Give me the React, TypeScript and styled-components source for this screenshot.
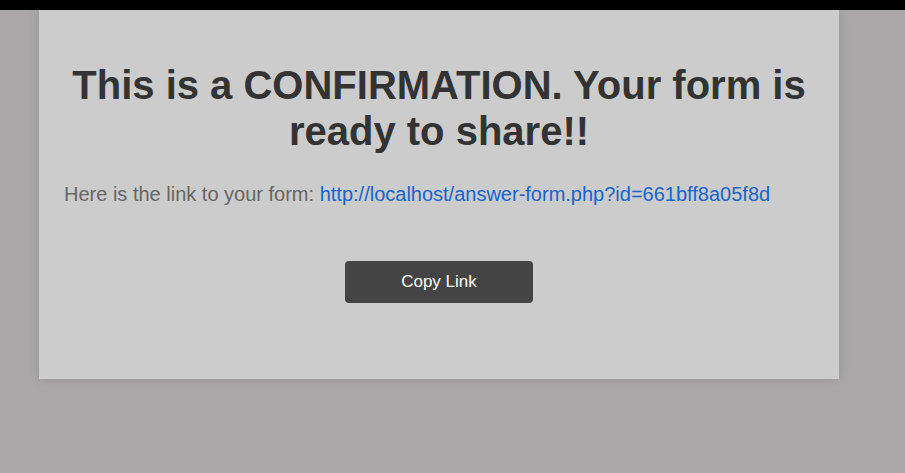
import React from "react";
import styled, { createGlobalStyle } from "styled-components";

const Global = createGlobalStyle`
  html, body { margin: 0; padding: 0; }
  body {
    background: #a9a7a7;
    font-family: "Liberation Sans", Arial, sans-serif;
    width: 905px;
    height: 473px;
    overflow: hidden;
  }
`;

const TopBar = styled.div`
  height: 10px;
  background: #000;
`;

const Card = styled.main`
  width: 800px;
  height: 369px;
  box-sizing: border-box;
  margin-left: 39px;
  background: #cccccc;
  box-shadow: 0 0 10px rgba(0, 0, 0, 0.12);
  padding: 52px 25px 0;
  display: flex;
  flex-direction: column;
`;

const Title = styled.h1`
  margin: 0;
  text-align: center;
  font-size: 40px;
  line-height: 46px;
  font-weight: 700;
  color: #333333;
`;

const Text = styled.p`
  margin: 28px 0 0;
  font-size: 20px;
  line-height: 24px;
  color: #666666;
`;

const Link = styled.a`
  color: #1565cf;
  text-decoration: none;
`;

const Button = styled.button`
  align-self: center;
  margin-top: 55px;
  width: 188px;
  height: 42px;
  border: none;
  border-radius: 4px;
  background: #444444;
  color: #ffffff;
  font-family: "Liberation Sans", Arial, sans-serif;
  font-size: 17px;
  cursor: pointer;
`;

export default function App() {
  return (
    <>
      <Global />
      <TopBar />
      <Card>
        <Title>This is a CONFIRMATION. Your form is ready to share!!</Title>
        <Text>
          Here is the link to your form:{" "}
          <Link href="#">http://localhost/answer-form.php?id=661bff8a05f8d</Link>
        </Text>
        <Button>Copy Link</Button>
      </Card>
    </>
  );
}
